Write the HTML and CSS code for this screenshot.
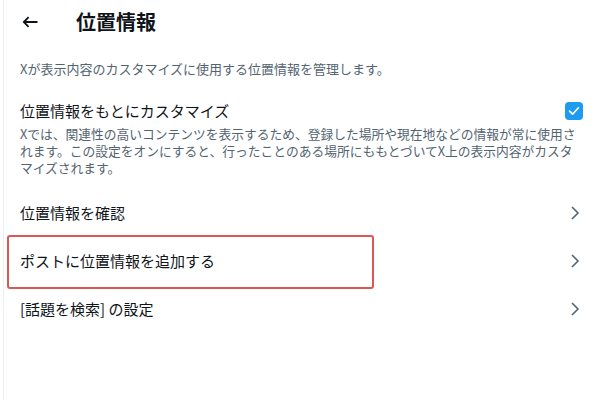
FILE: index.html
```html
<!DOCTYPE html>
<html lang="ja">
<head>
<meta charset="utf-8">
<title>位置情報</title>
<link rel="stylesheet" href="styles.css">
</head>
<body>
<div class="page">
  <header class="header">
    <svg class="back" width="16" height="12" viewBox="0 0 16 12" aria-hidden="true">
      <path d="M15.5 6H1.8M6.6 1.2L1.8 6l4.8 4.8" fill="none" stroke="#0f1419" stroke-width="1.8" stroke-linecap="butt" stroke-linejoin="miter"/>
    </svg>
    <h1 class="title">位置情報</h1>
  </header>

  <p class="desc">Xが表示内容のカスタマイズに使用する位置情報を管理します。</p>

  <div class="toggle-row">
    <span class="toggle-label">位置情報をもとにカスタマイズ</span>
    <span class="checkbox">
      <svg width="18" height="18" viewBox="0 0 18 18" aria-hidden="true">
        <path d="M4.6 9.2l3 3 5.8-6.4" fill="none" stroke="#fff" stroke-width="1.7" stroke-linecap="round" stroke-linejoin="round"/>
      </svg>
    </span>
  </div>
  <p class="note">Xでは、関連性の高いコンテンツを表示するため、登録した場所や現在地などの情報が常に使用されます。この設定をオンにすると、行ったことのある場所にももとづいてX上の表示内容がカスタマイズされます。</p>

  <ul class="menu">
    <li class="menu-item">
      <span>位置情報を確認</span>
      <svg class="chev" width="16" height="16" viewBox="0 0 16 16" aria-hidden="true"><path d="M5 2l6 6-6 6" fill="none" stroke="#536471" stroke-width="1.6"/></svg>
    </li>
    <li class="menu-item highlighted">
      <span>ポストに位置情報を追加する</span>
      <svg class="chev" width="16" height="16" viewBox="0 0 16 16" aria-hidden="true"><path d="M5 2l6 6-6 6" fill="none" stroke="#536471" stroke-width="1.6"/></svg>
      <span class="mark"></span>
    </li>
    <li class="menu-item">
      <span>[話題を検索] の設定</span>
      <svg class="chev" width="16" height="16" viewBox="0 0 16 16" aria-hidden="true"><path d="M5 2l6 6-6 6" fill="none" stroke="#536471" stroke-width="1.6"/></svg>
    </li>
  </ul>
</div>
</body>
</html>
```

FILE: styles.css
```css
html, body {
  margin: 0;
  padding: 0;
  background: #ffffff;
}

body {
  font-family: "Noto Sans CJK JP", "Noto Sans", sans-serif;
  color: #0f1419;
  text-autospace: no-autospace;
}

.page {
  margin-left: 3px;
  border-left: 1px solid #eceeef;
  min-height: 400px;
  box-sizing: border-box;
  padding: 0 14px 0 16px;
}

.header {
  height: 44px;
  display: flex;
  align-items: center;
}

.back {
  display: block;
  margin-left: 2px;
}

.title {
  margin: 0 0 0 38px;
  font-size: 20px;
  font-weight: 700;
  line-height: 24px;
}

.desc {
  margin: 16px 0 0;
  font-size: 13px;
  line-height: 17px;
  color: #536471;
}

.toggle-row {
  margin-top: 24px;
  display: flex;
  align-items: center;
  justify-content: space-between;
  height: 20px;
}

.toggle-label {
  font-size: 15px;
  line-height: 20px;
}

.checkbox {
  width: 18px;
  height: 18px;
  border-radius: 4px;
  background: #1d9bf0;
  margin-right: 1px;
  display: flex;
}

.note {
  margin: 4px 0 0;
  font-size: 12.75px;
  line-height: 17px;
  color: #536471;
}

.menu {
  list-style: none;
  margin: 13px 0 0;
  padding: 0;
}

.menu-item {
  position: relative;
  height: 48px;
  display: flex;
  align-items: center;
  justify-content: space-between;
  font-size: 15px;
  line-height: 20px;
}

.chev {
  display: block;
  margin-right: 1px;
}

.mark {
  position: absolute;
  left: -13px;
  top: -2px;
  width: 367px;
  height: 54px;
  box-sizing: border-box;
  border: 2px solid #dc5750;
  border-radius: 3px;
  pointer-events: none;
}
```
